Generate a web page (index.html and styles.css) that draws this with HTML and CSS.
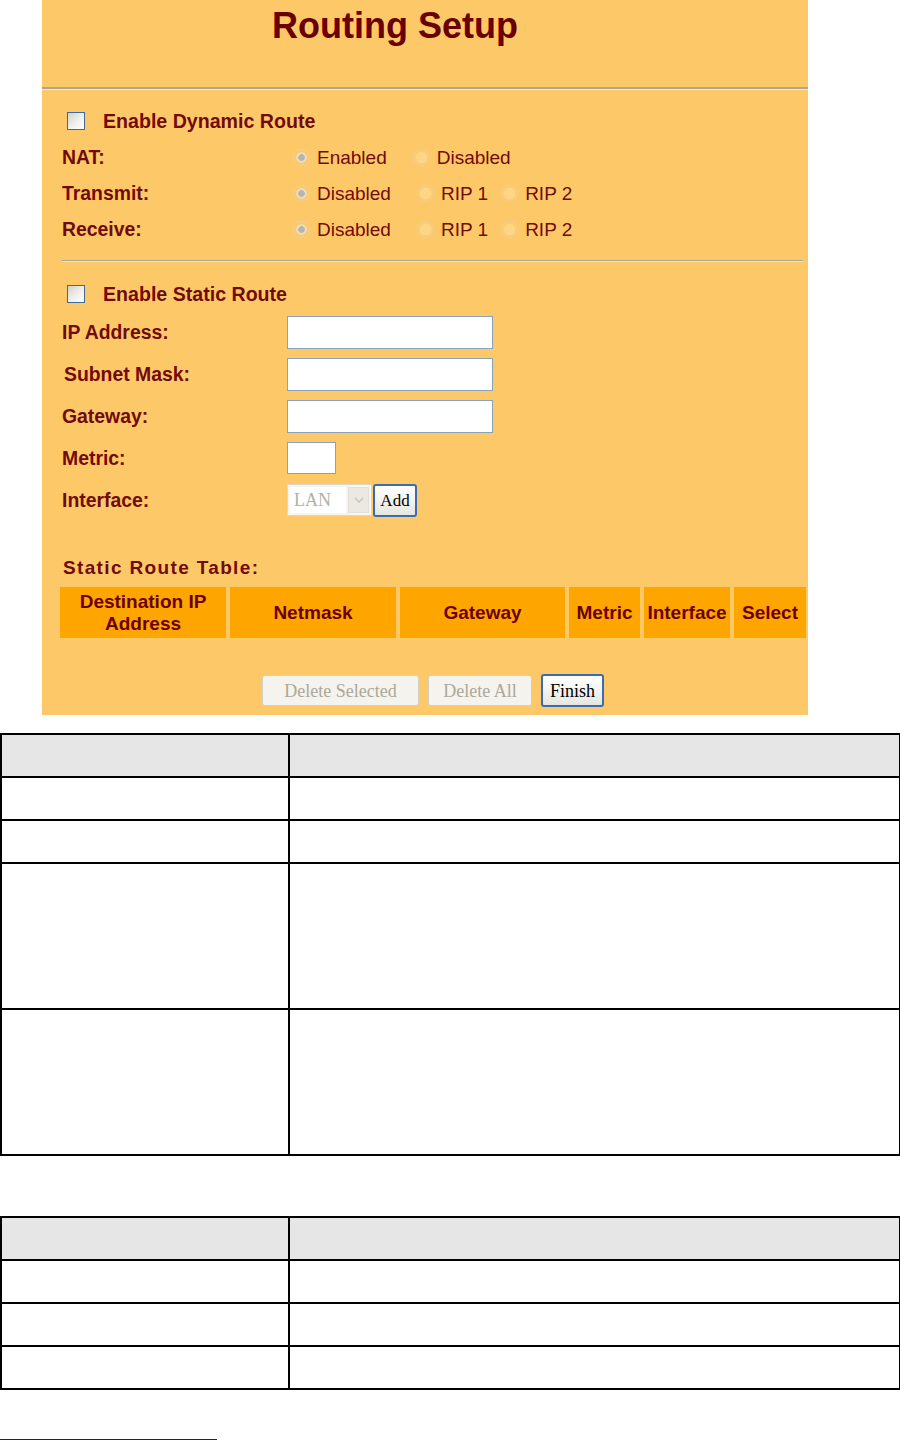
FILE: index.html
```html
<!DOCTYPE html>
<html lang="en">
<head>
<meta charset="utf-8">
<title>Routing Setup</title>
<link rel="stylesheet" href="styles.css">
</head>
<body>
<div class="panel">
  <h1 class="title">Routing Setup</h1>
  <div class="rule-main"></div>

  <section class="dyn">
    <label class="check-row"><input type="checkbox" class="cb"><span>Enable Dynamic Route</span></label>
    <div class="row">
      <span class="lbl">NAT:</span>
      <span class="opts"><input type="radio" class="rd" name="nat" checked disabled><span class="gap1">Enabled</span><input type="radio" class="rd" name="nat" disabled><span>Disabled</span></span>
    </div>
    <div class="row">
      <span class="lbl">Transmit:</span>
      <span class="opts"><input type="radio" class="rd" name="tx" checked disabled><span class="gap1">Disabled</span><input type="radio" class="rd" name="tx" disabled><span class="gap2">RIP 1</span><input type="radio" class="rd" name="tx" disabled><span>RIP 2</span></span>
    </div>
    <div class="row">
      <span class="lbl">Receive:</span>
      <span class="opts"><input type="radio" class="rd" name="rx" checked disabled><span class="gap1">Disabled</span><input type="radio" class="rd" name="rx" disabled><span class="gap2">RIP 1</span><input type="radio" class="rd" name="rx" disabled><span>RIP 2</span></span>
    </div>
  </section>

  <div class="rule-sub"></div>

  <section class="stat">
    <label class="check-row short"><input type="checkbox" class="cb"><span>Enable Static Route</span></label>
    <div class="field-row"><span class="lbl">IP Address:</span><input type="text" class="txt"></div>
    <div class="field-row"><span class="lbl indent">Subnet Mask:</span><input type="text" class="txt"></div>
    <div class="field-row"><span class="lbl">Gateway:</span><input type="text" class="txt"></div>
    <div class="field-row"><span class="lbl">Metric:</span><input type="text" class="txt metric"></div>
    <div class="field-row">
      <span class="lbl">Interface:</span>
      <span class="select">
        <span class="select-text">LAN</span>
        <span class="select-btn"><svg width="10" height="6" viewBox="0 0 10 6"><path d="M1 1 L5 5 L9 1" fill="none" stroke="#c9c7bd" stroke-width="1.6"/></svg></span>
      </span>
      <button class="btn btn-add">Add</button>
    </div>
  </section>

  <div class="tbl-title">Static Route Table:</div>
  <table class="route-table">
    <colgroup>
      <col class="c-dest"><col class="c-mask"><col class="c-gw"><col class="c-metric"><col class="c-if"><col class="c-sel">
    </colgroup>
    <thead>
      <tr>
        <th>Destination IP Address</th>
        <th>Netmask</th>
        <th>Gateway</th>
        <th>Metric</th>
        <th>Interface</th>
        <th>Select</th>
      </tr>
    </thead>
  </table>

  <div class="actions">
    <button class="btn btn-off btn-del-sel" disabled>Delete Selected</button>
    <button class="btn btn-off btn-del-all" disabled>Delete All</button>
    <button class="btn btn-finish">Finish</button>
  </div>
</div>

<table class="doc-table first">
  <colgroup><col class="dc1"><col class="dc2"></colgroup>
  <tr class="head"><td></td><td></td></tr>
  <tr><td></td><td></td></tr>
  <tr><td></td><td></td></tr>
  <tr class="tall"><td></td><td></td></tr>
  <tr class="tall"><td></td><td></td></tr>
</table>

<table class="doc-table second">
  <colgroup><col class="dc1"><col class="dc2"></colgroup>
  <tr class="head"><td></td><td></td></tr>
  <tr><td></td><td></td></tr>
  <tr><td></td><td></td></tr>
  <tr><td></td><td></td></tr>
</table>

<div class="footnote-rule"></div>
</body>
</html>
```
FILE: styles.css
```css
* {
  box-sizing: border-box;
}

body {
  margin: 0;
  background: #ffffff;
  font-family: "Liberation Sans", Arial, sans-serif;
}

.panel {
  width: 766px;
  height: 715px;
  margin-left: 42px;
  background: #fdc968;
  color: #720a0a;
}

.title {
  margin: 0;
  height: 87px;
  padding: 4px 0 0 230px;
  font-size: 36px;
  line-height: 44px;
  font-weight: bold;
  color: #6a0000;
}

.rule-main {
  height: 3px;
  border-top: 2px solid #aaa59b;
  border-bottom: 1px solid #f3e8d2;
}

.dyn {
  padding: 13px 0 0 20px;
}

.check-row {
  display: flex;
  align-items: center;
  height: 36px;
  font-size: 19.6px;
  font-weight: bold;
}

.check-row.short {
  height: 34px;
}

.cb {
  appearance: none;
  -webkit-appearance: none;
  margin: 0 18px 0 5px;
  width: 18px;
  height: 18px;
  border: 1px solid #3c6b96;
  background: linear-gradient(135deg, #d2d2cc 0%, #f2f2ef 60%, #ffffff 100%);
}

.row {
  display: flex;
  align-items: baseline;
  height: 36px;
  line-height: 36px;
  font-size: 19px;
}

.row .lbl {
  width: 231px;
  font-weight: bold;
  font-size: 19.4px;
}

.opts {
  white-space: nowrap;
}

.rd {
  appearance: none;
  -webkit-appearance: none;
  display: inline-block;
  width: 17px;
  height: 17px;
  margin: 0 7px 0 0;
  border-radius: 50%;
  border: 1px solid #ddd2bd;
  background: radial-gradient(circle, rgba(255, 226, 160, 0.5) 0 5px, transparent 7px);
  vertical-align: -2px;
}

.rd:checked {
  background: radial-gradient(circle, #b9b5ac 0 3px, #ebdcba 3.6px 5px, transparent 5.6px);
}

.gap1 {
  margin-right: 26px;
}

.gap2 {
  margin-right: 13px;
}

.rule-sub {
  height: 2px;
  margin: 13px 5px 0 20px;
  border-top: 1px solid #aca79c;
  border-bottom: 1px solid #efe1c0;
}

.stat {
  padding: 15px 0 0 20px;
}

.field-row {
  display: flex;
  align-items: center;
  height: 42px;
  font-size: 19.4px;
  font-weight: bold;
}

.field-row .lbl {
  width: 225px;
  line-height: 42px;
}

.field-row .lbl.indent {
  padding-left: 2px;
}

.txt {
  width: 206px;
  height: 33px;
  margin: 0;
  border: 1px solid #89a3bd;
  background: #ffffff;
  font-size: 16px;
}

.txt.metric {
  width: 49px;
  height: 32px;
}

.select {
  display: inline-flex;
  align-items: center;
  width: 85px;
  height: 32px;
  padding: 2px;
  border: 1px solid #dcd8c8;
  background: #f6f5f0;
}

.select-text {
  flex: 1;
  height: 100%;
  padding-left: 4px;
  background: #ffffff;
  font-family: "Liberation Serif", "Times New Roman", serif;
  font-weight: normal;
  font-size: 18px;
  line-height: 26px;
  color: #b2b0a8;
}

.select-btn {
  display: flex;
  align-items: center;
  justify-content: center;
  width: 21px;
  height: 100%;
  margin-left: 2px;
  background: #ebe9e2;
  border: 1px solid #e2e0d6;
}

.btn {
  margin: 0;
  padding: 0;
  font-family: "Liberation Serif", "Times New Roman", serif;
  font-size: 18px;
  line-height: 1;
  border-radius: 3px;
}

.btn-add {
  width: 44px;
  height: 33px;
  margin-left: 1px;
  font-size: 17px;
  color: #000000;
  border: 2px solid #3a6cb3;
  background: linear-gradient(#ffffff, #e6e6e0);
}

.tbl-title {
  margin-top: 35px;
  padding-left: 21px;
  font-size: 19px;
  line-height: 24px;
  font-weight: bold;
  letter-spacing: 1.35px;
}

.route-table {
  margin: 7px 0 0 14px;
  width: 754px;
  table-layout: fixed;
  border-collapse: separate;
  border-spacing: 4px 0;
}

.c-dest { width: 166px; }
.c-mask { width: 166px; }
.c-gw { width: 165px; }
.c-metric { width: 71px; }
.c-if { width: 86px; }
.c-sel { width: 72px; }

.route-table th {
  height: 51px;
  padding: 0;
  background: #ffa500;
  color: #6a0000;
  font-size: 19px;
  line-height: 22px;
  font-weight: bold;
  text-align: center;
  vertical-align: middle;
  white-space: normal;
}

.actions {
  display: flex;
  align-items: center;
  gap: 9px;
  margin-top: 36px;
  padding-left: 220px;
}

.btn-off {
  height: 31px;
  color: #aca899;
  border: 1px solid #d3d0c2;
  background: #f4f3ee;
}

.btn-del-sel {
  width: 157px;
}

.btn-del-all {
  width: 104px;
}

.btn-finish {
  width: 63px;
  height: 33px;
  color: #000000;
  border: 2px solid #3a6cb3;
  background: linear-gradient(#ffffff, #e6e6e0);
}

.doc-table {
  width: 899px;
  table-layout: fixed;
  border-collapse: collapse;
}

.doc-table.first {
  margin-top: 18px;
}

.doc-table.second {
  margin-top: 60px;
}

.dc1 { width: 288px; }
.dc2 { width: 611px; }

.doc-table td {
  height: 43px;
  padding: 0;
  border: 2px solid #000000;
}

.doc-table .head td {
  background: #e6e6e6;
}

.doc-table .tall td {
  height: 146px;
}

.footnote-rule {
  width: 217px;
  margin-top: 49px;
  border-top: 1px solid #1b1b6b;
}
```
